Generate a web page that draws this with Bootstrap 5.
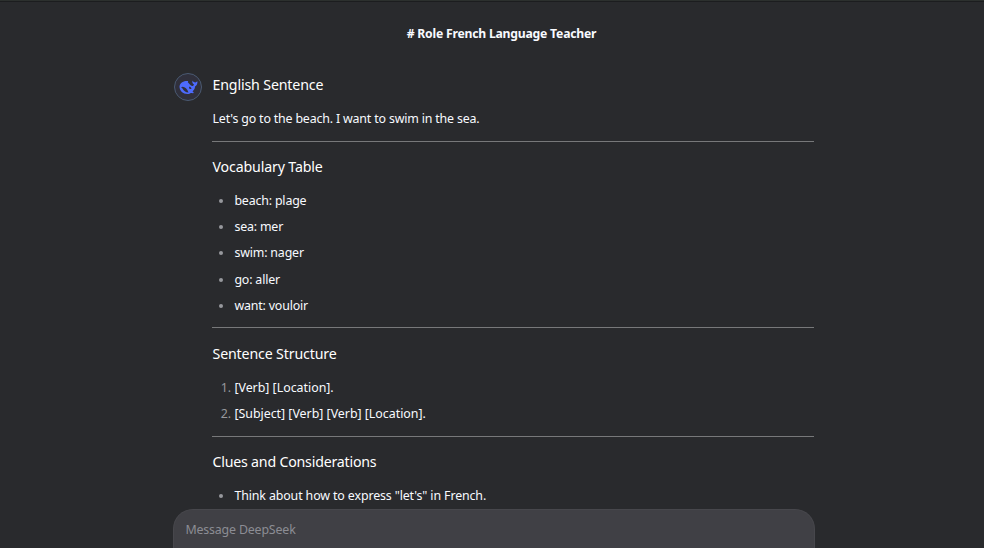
<!DOCTYPE html>
<html lang="en" data-bs-theme="dark">
<head>
<meta charset="utf-8">
<meta name="viewport" content="width=device-width, initial-scale=1">
<title>French Language Teacher</title>
<link rel="stylesheet" href="https://cdn.jsdelivr.net/npm/bootstrap@5.3.0/dist/css/bootstrap.min.css">
<style>
body{background:#292a2d;color:#f8faff;font-family:"Noto Sans",sans-serif;font-size:12.4px;line-height:26.2px;letter-spacing:-.17px}
.chat-page{height:548px;border-top:1px solid #2c302e;box-shadow:inset 0 1px #1c1d1f}
.chat-title{height:72px;padding:20px 0 0 19px;font-size:12.2px;letter-spacing:-.21px}
.chat-column{width:642px;margin-left:173px}
.bot-avatar{width:28px;height:28px;margin-left:1px;border:1px solid #4a5a72;background:#30303c}
.chat-body{height:436px;padding-right:1px}
.reply-text{margin-left:10px}
.chat-body h2{font-size:14.2px;font-weight:400;line-height:24px;margin:0 0 9px;padding-left:.5px;letter-spacing:-.15px}
.chat-body h2.tight-heading{letter-spacing:-.21px}
.chat-body p{padding-left:.5px}
.chat-body ul,.chat-body ol{padding-left:22.4px;margin:0}
.chat-body ol{letter-spacing:-.01px}
.chat-body ul.clues{letter-spacing:-.12px}
.chat-body li::marker{color:#96989c}
.chat-body hr{height:1px;border:0;background:#77787a;opacity:1;margin:8.3px 0 13.5px}
.composer{height:39px;background:#404045;border:1px solid #47474c;border-bottom:0;border-radius:20px 20px 0 0;padding:7px 11px 0 11.4px;color:#8c8d94}
</style>
</head>
<body>
<main class="chat-page d-flex flex-column overflow-hidden">
  <header class="chat-title text-center fw-bold flex-shrink-0"># Role French Language Teacher</header>
  <div class="chat-column">
    <article class="chat-body d-flex overflow-hidden">
      <div class="bot-avatar rounded-circle d-flex align-items-center justify-content-center flex-shrink-0">
        <svg width="19" height="14" viewBox="0 0 38 28" fill="#4d6bfe" aria-hidden="true">
          <path fill-rule="evenodd" d="M37 3c-2-1-3 2-5 2-3-1-4-2-5-4-1 4 0 6 3 8-1 2-2 3-4 3-4-2-6-5-8-7-1-1 1-2 0-3C12 1 2 4 1 13c0 9 7 15 16 15 3 0 5-1 7-2 2 0 4 1 5 0 1-2-1-2-2-3 3-3 5-6 5-10 3-1 5-5 5-10ZM19 25C13 25 9 21 7 17c-1-1-2-2-3-2 4-4 12 1 15 10Zm4-7c-1 0-3-1-3-3l1-2 3 2 1 3Z"/>
        </svg>
      </div>
      <div class="reply-text flex-grow-1">
        <h2>English Sentence</h2>
        <p class="mb-0">Let's go to the beach. I want to swim in the sea.</p>
        <hr>
        <h2>Vocabulary Table</h2>
        <ul>
          <li>beach: plage</li>
          <li>sea: mer</li>
          <li>swim: nager</li>
          <li>go: aller</li>
          <li>want: vouloir</li>
        </ul>
        <hr>
        <h2>Sentence Structure</h2>
        <ol>
          <li>[Verb] [Location].</li>
          <li>[Subject] [Verb] [Verb] [Location].</li>
        </ol>
        <hr>
        <h2 class="tight-heading">Clues and Considerations</h2>
        <ul class="clues">
          <li>Think about how to express "let's" in French.</li>
        </ul>
      </div>
    </article>
    <div class="composer">Message DeepSeek</div>
  </div>
</main>
<script src="https://cdn.jsdelivr.net/npm/bootstrap@5.3.0/dist/js/bootstrap.bundle.min.js"></script>
</body>
</html>
